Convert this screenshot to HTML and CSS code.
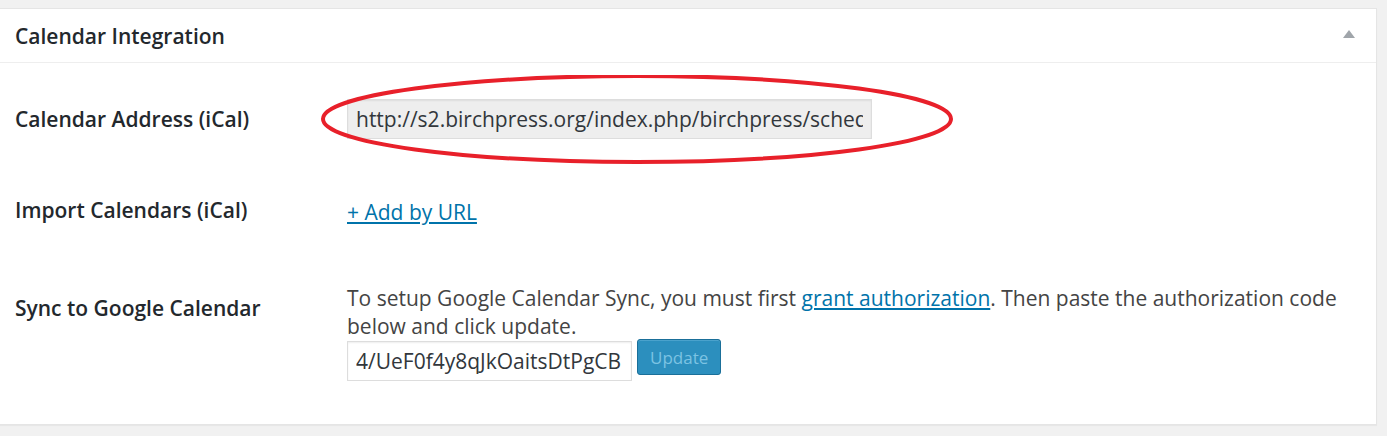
FILE: index.html
```html
<!DOCTYPE html>
<html lang="en">
    <head>
        <meta charset="UTF-8">
        <meta name="viewport" content="width=device-width, initial-scale=1.0">
        <title>Calendar Integration</title>
        <link rel="stylesheet" href="styles.css">
    </head>
    <body>
        <div class="postbox">
            <div class="postbox-header">
                <h2>Calendar Integration</h2>
                <span class="toggle"></span>
            </div>

            <div class="inside">
                <div class="row row-address">
                    <label class="row-label">Calendar Address (iCal)</label>
                    <div class="row-field">
                        <input class="field readonly" readonly
                            value="http://s2.birchpress.org/index.php/birchpress/schedule/ical/feed">
                        <svg class="circle" width="640" height="96" viewBox="0 0 640 96">
                            <ellipse cx="318" cy="44" rx="314" ry="43"
                                fill="none" stroke="#e8202a" stroke-width="4"/>
                        </svg>
                    </div>
                </div>

                <div class="row row-import">
                    <label class="row-label">Import Calendars (iCal)</label>
                    <div class="row-field">
                        <a href="#">+ Add by URL</a>
                    </div>
                </div>

                <div class="row row-sync">
                    <label class="row-label">Sync to Google Calendar</label>
                    <div class="row-field">
                        <p>To setup Google Calendar Sync, you must first <a href="#">grant authorization</a>. Then paste the authorization code below and click update.</p>
                        <div class="code-line">
                            <input class="field code" value="4/UeF0f4y8qJkOaitsDtPgCB">
                            <button disabled>Update</button>
                        </div>
                    </div>
                </div>
            </div>
        </div>
    </body>
</html>
```

FILE: styles.css
```css
body{
    margin: 0;
    background: #f1f1f1;
    font-family: "Open Sans", "Noto Sans", sans-serif;
    font-size: 21px;
    color: #444;
    height: 436px;
    overflow: hidden;
}

.postbox{
    margin: 8px 0 0 -1px;
    width: 1376px;
    background: #fff;
    border: 1px solid #e5e5e5;
    box-shadow: 0 1px 1px rgba(0, 0, 0, 0.04);
}

.postbox-header{
    display: flex;
    align-items: center;
    justify-content: space-between;
    height: 53px;
    padding: 0 21px 0 15px;
    border-bottom: 1px solid #eee;

    h2{
        margin: 0;
        font-size: 21px;
        font-weight: 600;
        color: #23282d;
    }
}

.toggle{
    width: 0;
    height: 0;
    border-left: 6px solid transparent;
    border-right: 6px solid transparent;
    border-bottom: 8px solid #a0a5aa;
    margin-top: -4px;
}

.inside{
    padding: 0 0 43px;
}

.row{
    display: flex;
}

.row-label{
    width: 347px;
    padding-left: 15px;
    box-sizing: border-box;
    font-weight: 600;
    color: #23282d;
    line-height: 28px;
    flex-shrink: 0;
}

.row-field{
    flex-grow: 1;
    line-height: 28px;
}

.row-address{
    padding-top: 36px;
    align-items: center;

    .row-field{
        position: relative;
    }
}

.circle{
    position: absolute;
    left: -28px;
    top: -24px;
    pointer-events: none;
}

.row-import{
    padding-top: 59px;

    .row-label{
        margin-top: -2px;
    }
}

.row-sync{
    padding-top: 58px;

    .row-label{
        padding-top: 10px;
    }

    p{
        margin: 0;
        padding-right: 10px;
    }
}

a{
    color: #0073aa;
    text-decoration: underline;
}

.field{
    box-sizing: border-box;
    height: 40px;
    padding: 0 8px;
    font-family: inherit;
    font-size: 21px;
    color: #32373c;
    border: 1px solid #ddd;
    box-shadow: inset 0 1px 2px rgba(0, 0, 0, 0.07);
    outline: none;

    &.readonly{
        width: 525px;
        background: #eee;
    }

    &.code{
        width: 285px;
        background: #fff;
        margin-top: 1px;
    }
}

.code-line{
    display: flex;
    align-items: flex-start;
    gap: 5px;
}

button{
    height: 36px;
    margin-top: -1px;
    padding: 0 12px;
    font-family: inherit;
    font-size: 17px;
    color: #7cc3e3;
    background: #2c8fbe;
    border: 1px solid #1a6f99;
    border-radius: 3px;
    box-shadow: inset 0 1px 0 rgba(120, 190, 225, 0.4);
}
```
